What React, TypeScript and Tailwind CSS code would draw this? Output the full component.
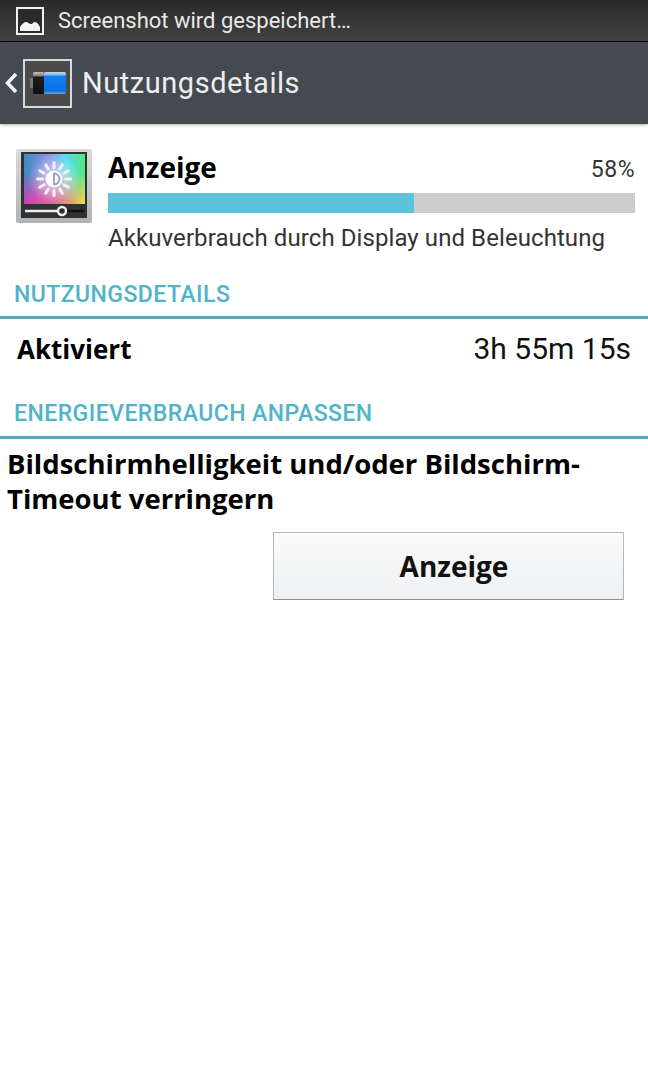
const ImageIcon = () => (
  <svg width="28" height="28" viewBox="0 0 28 28" className="shrink-0">
    <rect x="1" y="1" width="26" height="26" fill="#2b2b2b" stroke="#f2f2f2" strokeWidth="2" />
    <path d="M4 24v-4c2-3 4-5 6-5s3 2 5 2 2-2 4-2 4 3 5 5v4z" fill="#f4f4f4" />
  </svg>
);

const BatteryIcon = () => (
  <div className="w-[49px] h-[49px] shrink-0 border-2 border-[#d8dadc] bg-[#4c4a4a] flex items-center justify-center">
    <svg width="36" height="22" viewBox="0 0 36 22">
      <defs>
        <linearGradient id="cell" x1="0" y1="0" x2="0" y2="1">
          <stop offset="0" stopColor="#c4d8ea" />
          <stop offset="0.12" stopColor="#8cbcec" />
          <stop offset="0.2" stopColor="#1280f0" />
          <stop offset="0.85" stopColor="#0c70e4" />
          <stop offset="1" stopColor="#6ea4d8" />
        </linearGradient>
        <linearGradient id="empty" x1="0" y1="0" x2="0" y2="1">
          <stop offset="0" stopColor="#c0c0c0" />
          <stop offset="0.15" stopColor="#8a8a8a" />
          <stop offset="0.25" stopColor="#1c1c1c" />
          <stop offset="1" stopColor="#101010" />
        </linearGradient>
      </defs>
      <rect x="0" y="6" width="3" height="10" fill="#777777" />
      <rect x="3" y="0" width="11" height="22" rx="1.500" fill="url(#empty)" />
      <rect x="14" y="0" width="22" height="22" rx="1.500" fill="url(#cell)" />
    </svg>
  </div>
);

const rayAngles = [0, 30, 60, 90, 120, 150, 180, 210, 240, 270, 300, 330];

const DisplayIcon = () => (
  <svg width="76" height="76" viewBox="0 0 76 76" className="shrink-0">
    <defs>
      <linearGradient id="frame" x1="0" y1="0" x2="0" y2="1">
        <stop offset="0" stopColor="#dadada" />
        <stop offset="1" stopColor="#b0b2b4" />
      </linearGradient>
      <linearGradient id="rainbow" x1="0" y1="0" x2="1" y2="0">
        <stop offset="0" stopColor="#3a8cc0" />
        <stop offset="0.4" stopColor="#8e90e8" />
        <stop offset="0.7" stopColor="#58dcec" />
        <stop offset="1" stopColor="#50e880" />
      </linearGradient>
      <linearGradient id="bottom" x1="0" y1="0" x2="1" y2="0">
        <stop offset="0" stopColor="#d838b8" />
        <stop offset="0.55" stopColor="#f06088" />
        <stop offset="1" stopColor="#f6e040" />
      </linearGradient>
      <linearGradient id="fade" x1="0" y1="0" x2="0" y2="1">
        <stop offset="0.35" stopColor="#ffffff" stopOpacity="0" />
        <stop offset="1" stopColor="#ffffff" />
      </linearGradient>
      <mask id="fadeMask">
        <rect x="8" y="5" width="61" height="50" fill="url(#fade)" />
      </mask>
      <radialGradient id="glow" cx="0.5" cy="0.5" r="0.5">
        <stop offset="0" stopColor="#ffffff" stopOpacity="0.6" />
        <stop offset="1" stopColor="#ffffff" stopOpacity="0" />
      </radialGradient>
    </defs>
    <rect x="0" y="0" width="76" height="74" rx="2" fill="url(#frame)" />
    <rect x="5" y="3" width="66" height="66" fill="#303234" />
    <rect x="8" y="5" width="61" height="50" fill="url(#rainbow)" />
    <rect x="8" y="5" width="61" height="50" fill="url(#bottom)" mask="url(#fadeMask)" />
    <circle cx="38" cy="30" r="26" fill="url(#glow)" />
    {rayAngles.map((angle) => (
      <line
        key={angle}
        x1="38"
        y1="18.500"
        x2="38"
        y2="13.500"
        stroke="#fdeef6"
        strokeWidth="3"
        strokeLinecap="round"
        transform={`rotate(${angle} 38 30)`}
      />
    ))}
    <circle cx="38" cy="30" r="8.500" fill="#ffffff" />
    <path d="M38 24.500a5.500 5.500 0 0 1 0 11z" fill="none" stroke="#9c9cb8" strokeWidth="1.800" />
    <path d="M9 62h33" stroke="#ececec" strokeWidth="2.500" />
    <path d="M50 62h18" stroke="#111111" strokeWidth="2.500" />
    <circle cx="46" cy="62" r="4" fill="#2c2e30" stroke="#f0f0f0" strokeWidth="2.400" />
  </svg>
);

const App = () => {
  return (
    <div className="w-full min-h-[1080px] bg-white font-['Roboto',sans-serif] flex flex-col">
      <div className="h-[42px] bg-gradient-to-b from-[#2a2a2a] to-[#424242] border-b border-[#0c0c0c] flex items-center pl-[16px] gap-[14px]">
        <ImageIcon />
        <span className="text-[22px] leading-none text-[#e8e8e8]">Screenshot wird gespeichert…</span>
      </div>

      <div className="h-[82px] bg-[#454a52] flex items-center shadow-[0_1px_3px_rgba(0,0,0,0.3)] z-10">
        <svg width="14" height="22" viewBox="0 0 14 22" className="ml-[4px] mr-[5px] shrink-0">
          <path d="M12 2 3.500 11 12 20" fill="none" stroke="#f4f4f4" strokeWidth="3.500" />
        </svg>
        <BatteryIcon />
        <h1 className="ml-[10px] text-[29px] leading-none text-[#eeeeee] font-normal tracking-[0.55px]">Nutzungsdetails</h1>
      </div>

      <div className="flex pl-[16px] pr-[13px] pt-[25px] gap-[16px]">
        <DisplayIcon />
        <div className="flex-1 min-w-0">
          <div className="flex items-start justify-between h-[44px]">
            <span className="font-['Open_Sans',sans-serif] font-bold text-[28px] leading-[36px] text-black">Anzeige</span>
            <span className="mt-[6px] text-[23px] leading-[30px] text-[#333333] tracking-[0.5px]">58%</span>
          </div>
          <div className="h-[20px] bg-[#cccccc]">
            <div className="h-full bg-[#5ec2dc]" style={{ width: '58%' }} />
          </div>
          <p className="mt-[11px] text-[24px] leading-[28px] text-[#333333] whitespace-nowrap tracking-[0.08px]">Akkuverbrauch durch Display und Beleuchtung</p>
        </div>
      </div>

      <h2 className="mt-[24px] pl-[14px] h-[36px] flex items-center text-[23px] font-medium leading-none text-[#4fb4c8] tracking-[0.45px]">NUTZUNGSDETAILS</h2>
      <div className="mt-[4px] h-[3px] bg-[#5aa9b7]" />

      <div className="flex items-center justify-between pl-[17px] pr-[17px] h-[60px]">
        <span className="font-['Open_Sans',sans-serif] font-bold text-[26px] leading-none text-black">Aktiviert</span>
        <span className="text-[30px] leading-none text-[#111111]">3h 55m 15s</span>
      </div>

      <h2 className="mt-[16px] pl-[14px] h-[36px] flex items-center text-[23px] font-medium leading-none text-[#4fb4c8] tracking-[0.45px]">ENERGIEVERBRAUCH ANPASSEN</h2>
      <div className="mt-[5px] h-[3px] bg-[#5aa9b7]" />

      <p className="mt-[7px] px-[7px] font-['Open_Sans',sans-serif] font-bold text-[27.5px] leading-[35px] text-black">
        Bildschirmhelligkeit und/oder Bildschirm-
        <br />
        Timeout verringern
      </p>

      <div className="mt-[16px] flex justify-end pr-[24px]">
        <button className="w-[351px] h-[68px] pl-[11px] border border-[#b4b6b8] border-b-[#8e9092] bg-gradient-to-b from-[#fbfbfb] to-[#eef0f2] font-['Open_Sans',sans-serif] font-bold text-[28px] text-[#111111]">
          Anzeige
        </button>
      </div>
    </div>
  );
};

export default App;
